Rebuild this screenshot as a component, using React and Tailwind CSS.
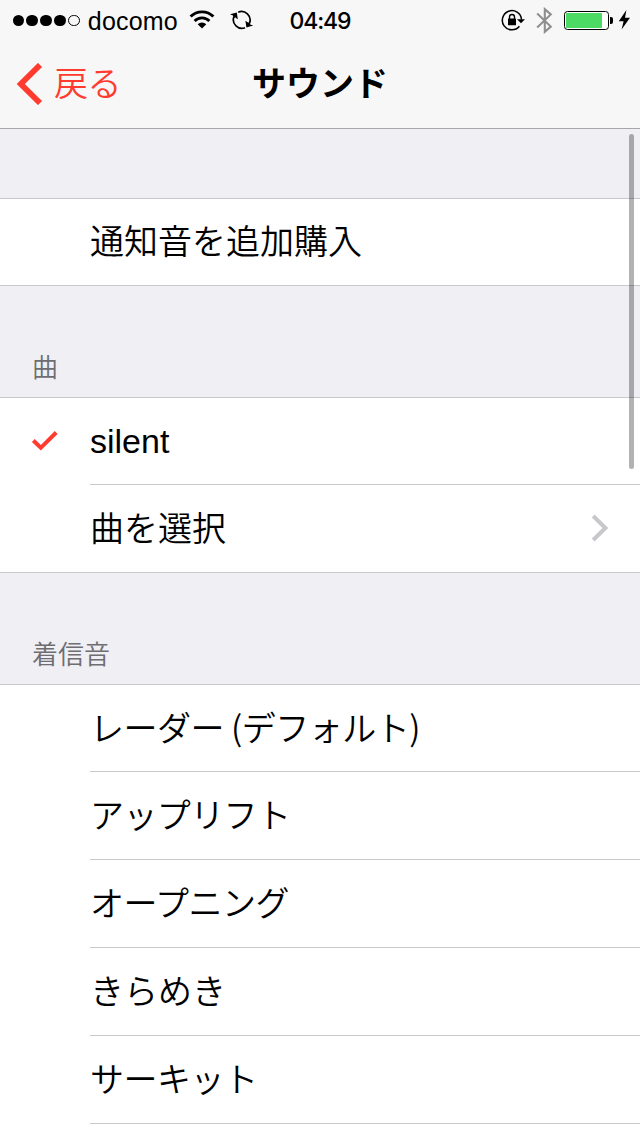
const RINGTONES = [
  { label: 'レーダー (デフォルト)', className: "-mt-[3px] font-['Noto_Sans_CJK_JP',sans-serif] tracking-[-0.5px]" },
  { label: 'アップリフト', className: 'tracking-[-0.6px]' },
  { label: 'オープニング', className: 'tracking-[-0.5px]' },
  { label: 'きらめき', className: '' },
  { label: 'サーキット', className: 'tracking-[-0.5px]' },
];

function Wifi() {
  return (
    <svg className="ml-[10px] mt-[10px]" width="26" height="20" viewBox="0 0 26 20" fill="none" stroke="#000">
      <path d="M1.6 6.6A16 16 0 0 1 24.4 6.6" strokeWidth="2.9" />
      <path d="M5.6 11A10.4 10.4 0 0 1 20.4 11" strokeWidth="2.8" />
      <path d="M13 18.6L8.7 14.3A6.1 6.1 0 0 1 17.3 14.3Z" fill="#000" stroke="none" />
    </svg>
  );
}

function Sync() {
  return (
    <svg className="ml-[15px] mt-[10px]" width="24" height="20" viewBox="0 0 24 20" fill="none" stroke="#000" strokeWidth="1.7">
      <path d="M8.2 2.2A8.6 8.6 0 0 1 19.6 13" />
      <path d="M15 17.8A8.6 8.6 0 0 1 3.8 7" />
      <path d="M0 4.3L6.8 2.4L7.8 9.2L5 7.2L3.4 8.8L3 5.4Z" fill="#000" stroke="none" />
      <path d="M23.2 15.6L16.4 17.5L15.4 10.7L18.4 12.7L20 11.1L20.2 14.4Z" fill="#000" stroke="none" />
    </svg>
  );
}

function RotationLock() {
  return (
    <svg className="mt-[9px]" width="24" height="22" viewBox="0 0 24 22" fill="none" stroke="#000">
      <path d="M18.4 17.3A9.6 9.6 0 1 1 20.5 10.5" strokeWidth="1.5" />
      <path d="M16 10.3H24L20 14.2Z" fill="#000" stroke="none" />
      <rect x="7" y="9.5" width="8" height="6.8" rx=".6" fill="#000" stroke="none" />
      <path d="M8.5 10V8A2.5 2.5 0 0 1 13.5 8V10" strokeWidth="1.4" />
    </svg>
  );
}

function Bluetooth() {
  return (
    <svg className="ml-[11px] mt-[7px]" width="17" height="27" viewBox="0 0 17 27" fill="none" stroke="#8f8f8f" strokeWidth="2.1">
      <path d="M1.2 6.5L14.8 19.6L8.8 24.8V2.2L14.8 7.4L1.2 20.5" />
    </svg>
  );
}

function Battery() {
  return (
    <svg className="ml-[11px] mt-[11px]" width="50" height="20" viewBox="0 0 50 20">
      <rect x=".5" y=".5" width="44" height="18" rx="3" fill="#fff" stroke="#000" />
      <rect x="2" y="2" width="36" height="15" rx=".8" fill="#4cd964" />
      <path d="M46 6H47A2 2 0 0 1 49 8V11A2 2 0 0 1 47 13H46Z" />
    </svg>
  );
}

function StatusBar() {
  return (
    <div className="relative flex h-10 items-start">
      <div className="ml-[12.5px] mt-[14.5px] flex gap-[2.6px]">
        <i className="size-[11.4px] rounded-full bg-black" />
        <i className="size-[11.4px] rounded-full bg-black" />
        <i className="size-[11.4px] rounded-full bg-black" />
        <i className="size-[11.4px] rounded-full bg-black" />
        <i className="size-[11.4px] rounded-full border border-black" />
      </div>
      <span className="ml-[8px] mt-[7px] w-[91px] whitespace-nowrap text-[25px] leading-[28px] tracking-[0.2px]">docomo</span>
      <Wifi />
      <Sync />
      <span className="absolute left-[320px] top-[7px] -translate-x-1/2 font-['Inter'] text-[23px] font-medium leading-[28px] tracking-[-1.1px]">
        04:49
      </span>
      <div className="ml-auto mr-[9px] flex items-start">
        <RotationLock />
        <Bluetooth />
        <Battery />
        <svg className="ml-[4px] mt-[10px]" width="13" height="20" viewBox="0 0 13 20">
          <path d="M8.4 0L.8 11.2H5.6L3.6 19.6L12 7.8H7Z" />
        </svg>
      </div>
    </div>
  );
}

function NavBar() {
  return (
    <div className="grid h-[88px] grid-cols-3 items-center">
      <div className="flex items-center pl-[16px] text-[#ff3b30]">
        <svg width="27" height="42" viewBox="0 0 27 42" fill="none" stroke="currentColor" strokeWidth="5.8">
          <path d="M24 2L4.8 21L24 40" />
        </svg>
        <span className="ml-[11px] text-[34px] font-[350] leading-[40px] tracking-[-0.6px]">戻る</span>
      </div>
      <h1 className="text-center text-[34px] font-bold leading-[40px]">サウンド</h1>
    </div>
  );
}

function Section({ children }) {
  return (
    <div className="border-y border-[#c8c7cc] bg-white">{children}</div>
  );
}

function Row({ label, checked, chevron, first, last, className = 'font-[350]' }) {
  return (
    <div className="flex">
      <div className="flex w-[90px] items-center pl-[31px]">
        {checked && (
          <svg className="-mt-0.5" width="28" height="22" viewBox="0 0 28 22" fill="none" stroke="#ff3b30" strokeWidth="4">
            <path d="M2.3 10.5L9.8 17.8L25.2 2.5" />
          </svg>
        )}
      </div>
      <div
        className={`flex flex-1 items-center justify-between pr-[31px] ${first ? 'h-[86px]' : 'h-[87px]'} ${last ? '' : 'box-content border-b border-[#c8c7cc]'}`}
      >
        <span className={`whitespace-nowrap text-[34px] leading-[40px] ${className}`}>{label}</span>
        {chevron && (
          <svg className="-mt-0.5" width="18" height="28" viewBox="0 0 18 28" fill="none" stroke="#c7c7cc" strokeWidth="4">
            <path d="M2.2 2L14.4 14L2.2 26" />
          </svg>
        )}
      </div>
    </div>
  );
}

function SectionTitle({ children }) {
  return (
    <h2 className="flex h-[111px] items-end pb-[12px] pl-[32px] text-[26px] font-[350] leading-[34px] text-[#6d6d72]">
      {children}
    </h2>
  );
}

export default function App() {
  return (
    <div className="relative h-[1136px] w-[640px] overflow-hidden bg-[#efeff4] font-['Liberation_Sans','Noto_Sans_CJK_JP',sans-serif] text-black">
      <header className="h-[129px] border-b border-[#a7a7ab] bg-[#f7f7f7]">
        <StatusBar />
        <NavBar />
      </header>

      <main className="pt-[69px]">
        <Section>
          <Row label="通知音を追加購入" first last />
        </Section>

        <SectionTitle>曲</SectionTitle>
        <Section>
          <Row label="silent" checked first className="font-normal" />
          <Row label="曲を選択" chevron last />
        </Section>

        <SectionTitle>着信音</SectionTitle>
        <Section>
          {RINGTONES.map((r, i) => (
            <Row key={r.label} label={r.label} first={i === 0} className={`font-[350] ${r.className}`} />
          ))}
          <div className="h-[86px]" />
        </Section>
      </main>

      {/* scroll indicator */}
      <div className="absolute left-[629px] top-[134px] h-[335px] w-[5px] rounded-full bg-black/30" />
    </div>
  );
}
